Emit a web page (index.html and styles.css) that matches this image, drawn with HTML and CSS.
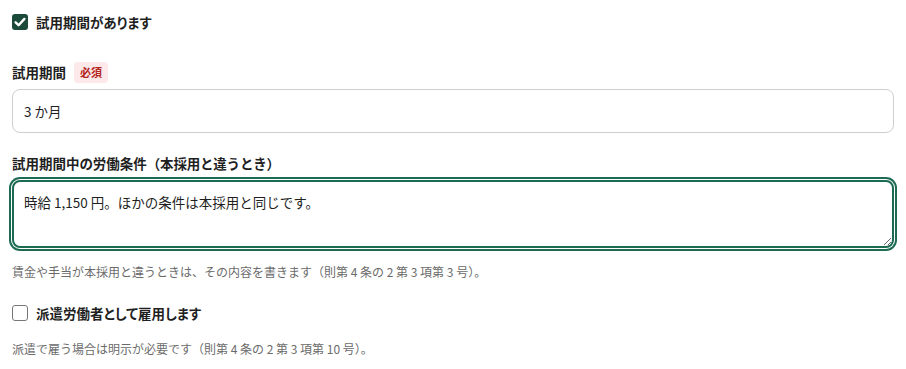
FILE: index.html
```html
<!DOCTYPE html>
<html lang="ja">

<head>
    <title>試用期間</title>
    <meta charset="UTF-8">
    <meta name="viewport" content="width=device-width, initial-scale=1.0">
    <link rel="stylesheet" href="styles.css">
</head>

<body>
    <div class="form">
        <label class="check-row">
            <span class="box checked">
                <svg viewBox="0 0 16 16" width="16" height="16">
                    <path d="M3.6 8.3 L6.6 11.2 L12.4 4.9" fill="none" stroke="#fff" stroke-width="2.4" stroke-linecap="round" stroke-linejoin="round"/>
                </svg>
            </span>
            <span class="check-text">試用期間があります</span>
        </label>

        <div class="form-group first">
            <div class="label-row">
                <label for="period">試用期間</label>
                <span class="badge">必須</span>
            </div>
            <input type="text" id="period" value="3 か月">
        </div>

        <div class="form-group second">
            <div class="label-row">
                <label for="terms">試用期間中の労働条件<span class="paren">（本採用と違うとき）</span></label>
            </div>
            <textarea id="terms" class="focused">時給 1,150 円。ほかの条件は本採用と同じです。</textarea>
            <p class="hint">賃金や手当が本採用と違うときは、その内容を書きます（則第 4 条の 2 第 3 項第 3 号）。</p>
        </div>

        <label class="check-row dispatch">
            <span class="box"></span>
            <span class="check-text">派遣労働者として雇用します</span>
        </label>
        <p class="hint last">派遣で雇う場合は明示が必要です（則第 4 条の 2 第 3 項第 10 号）。</p>
    </div>
</body>

</html>
```

FILE: styles.css
```css
body {
    margin: 0;
    padding: 12px;
    font-family: "Noto Sans CJK JP", "Noto Sans", sans-serif;
    font-feature-settings: "palt";
    color: #1f1f1f;
    background-color: #fff;
}

.check-row {
    display: flex;
    align-items: center;
    gap: 8px;
    height: 20px;
    cursor: pointer;
}

.box {
    display: flex;
    align-items: center;
    justify-content: center;
    width: 16px;
    height: 16px;
    box-sizing: border-box;
    border: 1.5px solid #777;
    border-radius: 3px;
    background-color: #fff;
}

.box.checked {
    border: none;
    background-color: #1b4a3a;
}

.check-text {
    font-size: 13.5px;
    font-weight: bold;
}

.form-group.first {
    margin-top: 29px;
}

.form-group.second {
    margin-top: 19px;
}

.label-row {
    display: flex;
    align-items: center;
    gap: 8px;
    height: 22px;
    margin-bottom: 6px;
}

.label-row label {
    font-size: 13.5px;
    font-weight: bold;
}

.label-row .paren {
    font-feature-settings: normal;
    letter-spacing: -0.2px;
}

.badge {
    padding: 2px 6px;
    border-radius: 4px;
    background-color: #fde8ea;
    color: #b3261e;
    font-size: 11px;
    font-weight: bold;
    line-height: 17px;
}

.form-group input,
.form-group textarea {
    display: block;
    width: 100%;
    box-sizing: border-box;
    font-family: inherit;
    font-size: 13.5px;
    color: #1f1f1f;
    background-color: #fff;
    border: 1px solid #cfcfcf;
    border-radius: 8px;
}

.form-group input {
    height: 44px;
    padding: 0 11px;
}

.form-group textarea {
    height: 68px;
    margin-top: 6px;
    padding: 10px 10px;
    line-height: 20px;
    resize: vertical;
    outline: none;
}

.form-group textarea.focused {
    border: 2px solid #1d6b52;
    box-shadow: 0 0 0 1px #fff, 0 0 0 3px #1d6b52;
}

.hint {
    margin: 15px 0 0;
    font-size: 12px;
    line-height: 18px;
    color: #6b6b6b;
    font-feature-settings: normal;
}

.check-row.dispatch {
    margin-top: 22px;
}

.hint.last {
    margin-top: 17px;
}
```
